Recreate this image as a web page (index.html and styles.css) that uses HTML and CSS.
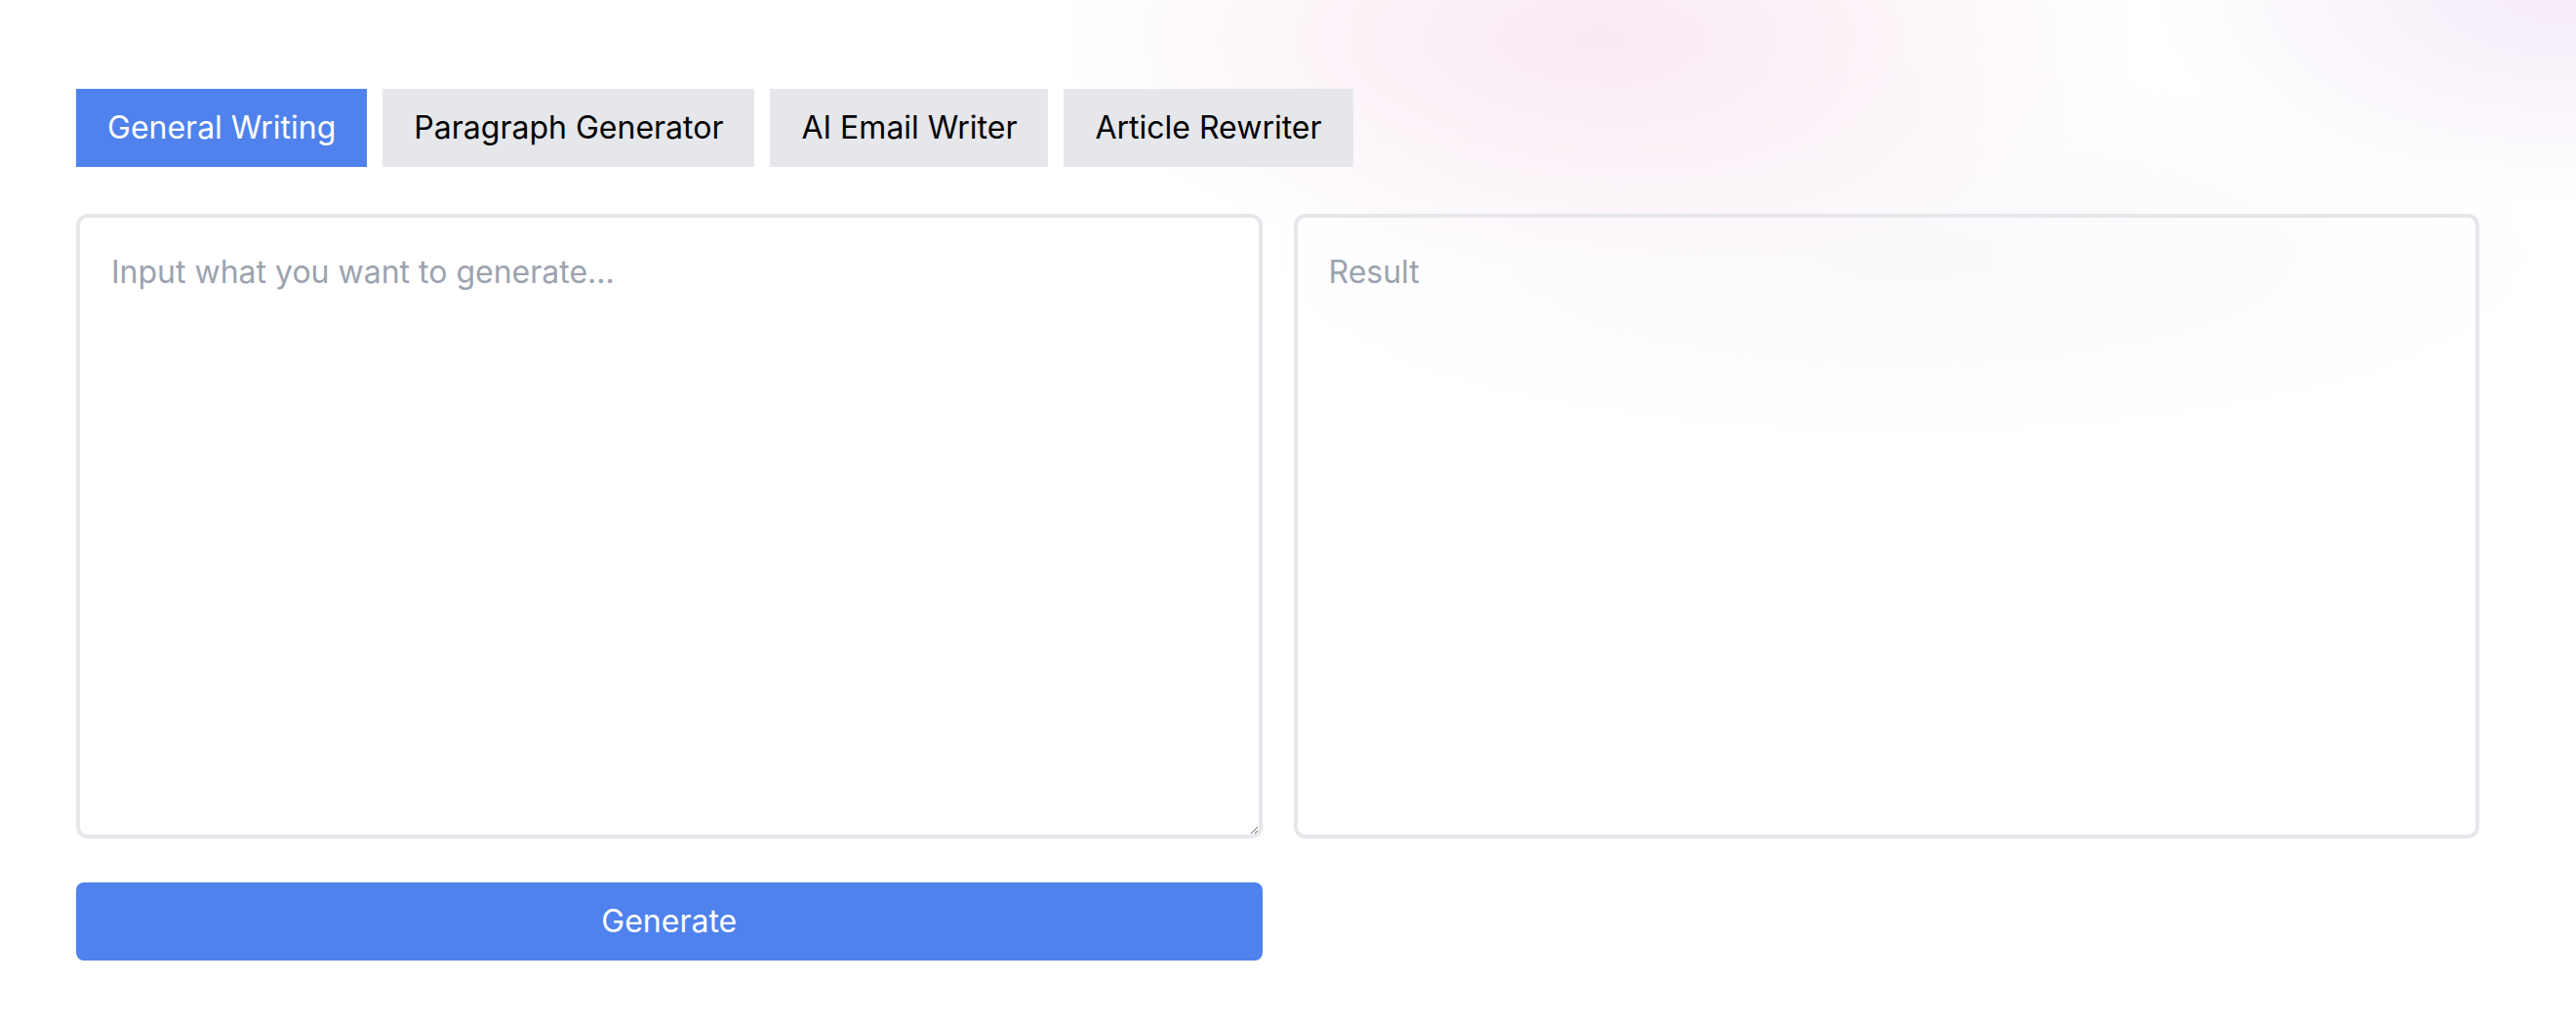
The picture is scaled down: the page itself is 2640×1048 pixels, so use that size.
FILE: index.html
```html
<!DOCTYPE html>
<html lang="en">
<head>
<meta charset="utf-8">
<title>AI Writer</title>
<link rel="stylesheet" href="styles.css">
</head>
<body>
<div class="glow"></div>
<main class="page">
  <nav class="tabs">
    <button class="tab active">General Writing</button>
    <button class="tab">Paragraph Generator</button>
    <button class="tab">AI Email Writer</button>
    <button class="tab">Article Rewriter</button>
  </nav>
  <section class="panels">
    <div class="col">
      <textarea class="box input" placeholder="Input what you want to generate..."></textarea>
      <button class="generate">Generate</button>
    </div>
    <div class="col">
      <div class="box result">Result</div>
    </div>
  </section>
</main>
</body>
</html>
```
FILE: styles.css
```css
html, body {
  margin: 0;
  padding: 0;
  background: #ffffff;
}
body {
  font-family: Inter, "Noto Sans", "Liberation Sans", sans-serif;
  width: 2640px;
  height: 1048px;
  overflow: hidden;
  position: relative;
}
.glow {
  position: absolute;
  inset: 0;
  pointer-events: none;
  background:
    radial-gradient(ellipse 560px 240px at 1640px 40px, rgba(243, 214, 233, 0.55), rgba(243, 214, 233, 0) 100%),
    radial-gradient(ellipse 420px 220px at 2620px -10px, rgba(236, 218, 243, 0.55), rgba(236, 218, 243, 0) 100%),
    radial-gradient(ellipse 700px 200px at 1950px 260px, rgba(246, 240, 246, 0.45), rgba(246, 240, 246, 0) 100%);
}
.page {
  position: relative;
  padding: 91px 0 0 78px;
  width: 2463px;
}
.tabs {
  display: flex;
  gap: 16px;
}
.tab {
  font-family: inherit;
  font-size: 32px;
  line-height: 48px;
  padding: 16px 32px;
  border: 0;
  border-radius: 0;
  background: #e5e7eb;
  color: #000000;
  cursor: pointer;
}
.tab.active {
  background: #4f82ed;
  color: #ffffff;
}
.panels {
  margin-top: 48px;
  display: grid;
  grid-template-columns: 1fr 1fr;
  gap: 32px;
}
.col {
  display: flex;
  flex-direction: column;
}
.box {
  box-sizing: border-box;
  height: 640px;
  border: 4px solid #e5e7eb;
  border-radius: 12px;
  padding: 32px;
  font-family: inherit;
  font-size: 32px;
  line-height: 48px;
  color: #111827;
}
.input {
  display: block;
  width: 100%;
  background: #ffffff;
  resize: vertical;
  outline: none;
}
.input::placeholder {
  color: #9ca3af;
}
.result {
  color: #9ca3af;
  background: transparent;
}
.generate {
  margin-top: 45px;
  height: 80px;
  border: 0;
  border-radius: 8px;
  background: #4f82ed;
  color: #ffffff;
  font-family: inherit;
  font-size: 32px;
  line-height: 48px;
  cursor: pointer;
}
```
